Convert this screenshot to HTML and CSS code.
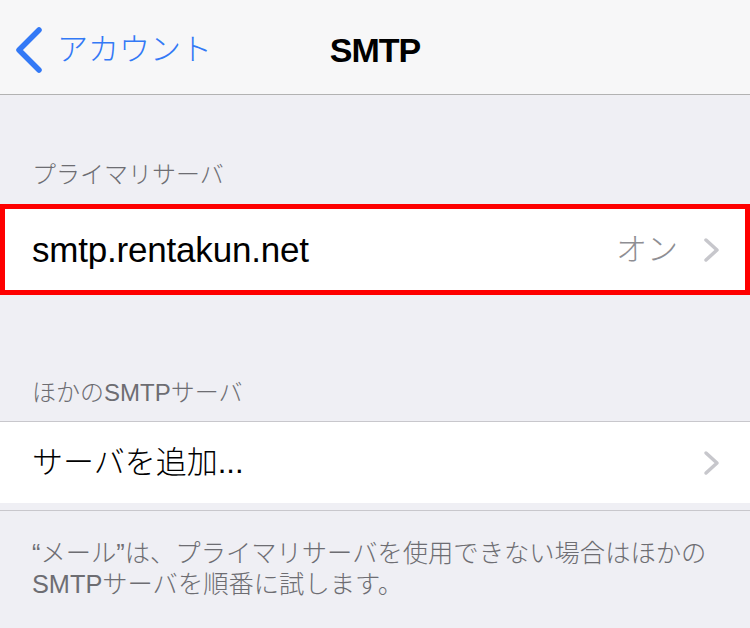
FILE: index.html
```html
<!DOCTYPE html>
<html lang="ja">
<head>
<meta charset="utf-8">
<title>SMTP</title>
<link rel="stylesheet" href="styles.css">
</head>
<body>
<header class="nav">
  <div class="back">
    <svg class="back-icon" width="30" height="46" viewBox="0 0 30 46"><polyline points="25,3 5,23 25,43" fill="none" stroke="#3379f6" stroke-width="5.5" stroke-linecap="round" stroke-linejoin="round"/></svg>
    <span class="back-text">アカウント</span>
  </div>
  <div class="title">SMTP</div>
  <div></div>
</header>

<div class="sec-head first">プライマリサーバ</div>
<div class="cell highlighted">
  <span class="cell-main latin">smtp.rentakun.net</span>
  <span class="cell-detail">オン</span>
  <svg class="chev" width="17" height="26" viewBox="0 0 17 26"><polyline points="3,3 14,13 3,23" fill="none" stroke="#c7c7cc" stroke-width="3.5" stroke-linecap="round" stroke-linejoin="round"/></svg>
</div>

<div class="sec-head second">ほかのSMTPサーバ</div>
<div class="cell plain">
  <span class="cell-main jp">サーバを追加...</span>
  <svg class="chev" width="17" height="26" viewBox="0 0 17 26"><polyline points="3,3 14,13 3,23" fill="none" stroke="#c7c7cc" stroke-width="3.5" stroke-linecap="round" stroke-linejoin="round"/></svg>
</div>
<div class="strip"></div>
<div class="footer">“メール”は、プライマリサーバを使用できない場合はほかの<br>SMTPサーバを順番に試します。</div>
</body>
</html>
```
FILE: styles.css
```css
* { box-sizing: border-box; }
html, body {
  margin: 0;
  padding: 0;
}
body {
  width: 750px;
  height: 628px;
  overflow: hidden;
  background: #efeff4;
  font-family: "Liberation Sans", "Noto Sans CJK JP", sans-serif;
  color: #000;
}
.nav {
  height: 95px;
  padding-top: 6px;
  background: #f7f7f8;
  border-bottom: 1px solid #b2b2b2;
  display: grid;
  grid-template-columns: 1fr auto 1fr;
  align-items: center;
}
.back {
  display: flex;
  align-items: center;
  padding-left: 14px;
  color: #3379f6;
}
.back-icon { display: block; }
.back-text {
  margin-left: 13px;
  font-size: 31px;
  font-weight: 300;
  line-height: 40px;
}
.title {
  font-weight: bold;
  font-size: 34px;
  letter-spacing: -1px;
  line-height: 40px;
}
.sec-head {
  padding-left: 32px;
  font-size: 24px;
  font-weight: 300;
  line-height: 30px;
  color: #6d6d72;
}
.sec-head.first { padding-top: 65px; padding-bottom: 14px; }
.sec-head.second { padding-top: 83px; padding-bottom: 13px; }
.cell {
  display: flex;
  align-items: center;
  background: #fff;
}
.cell.highlighted {
  height: 91px;
  border: 5px solid #fe0000;
  padding-left: 27px;
  padding-right: 25px;
}
.cell.plain {
  height: 82px;
  border-top: 1px solid #c8c7cc;
  padding-left: 32px;
  padding-right: 30px;
}
.cell-main { flex: 1; }
.cell-main.latin {
  font-size: 35px;
  letter-spacing: -0.2px;
  line-height: 40px;
}
.cell-main.jp {
  font-size: 31px;
  font-weight: 300;
  line-height: 40px;
}
.cell-detail {
  font-size: 31px;
  font-weight: 300;
  line-height: 40px;
  color: #8e8e93;
  margin-right: 25px;
}
.chev { display: block; }
.strip {
  height: 8px;
  border-bottom: 1px solid #c8c7cc;
}
.footer {
  padding: 27px 32px 0;
  font-size: 25.3px;
  font-weight: 300;
  line-height: 31px;
  color: #6d6d72;
}
```
